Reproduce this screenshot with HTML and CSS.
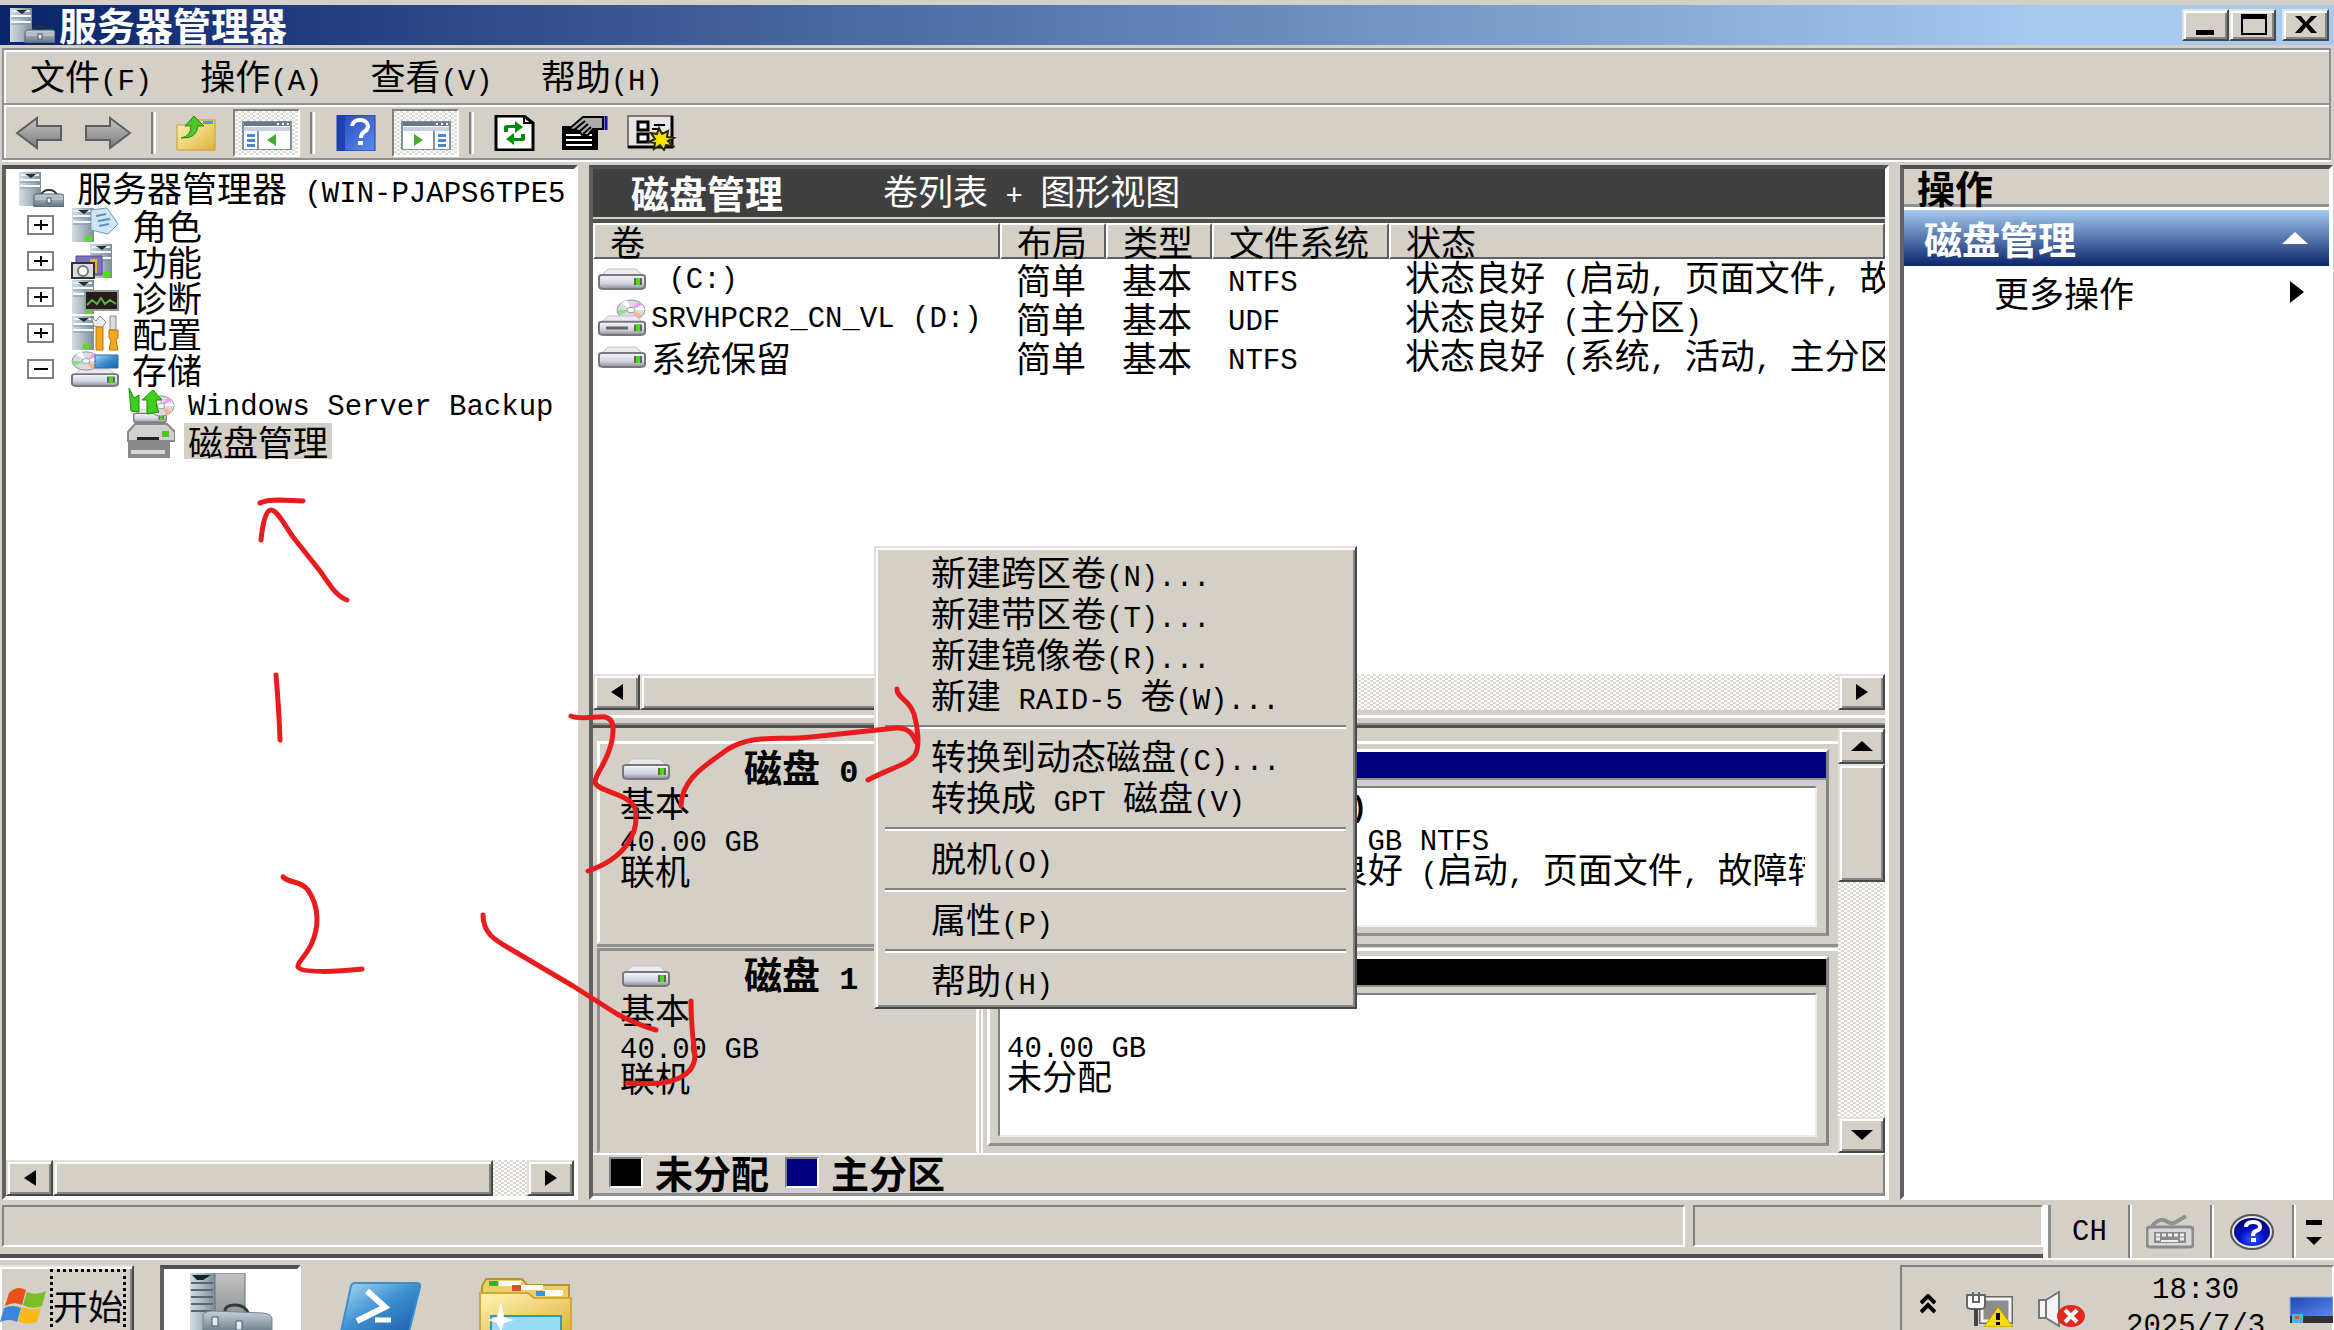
FILE: index.html
```html
<!DOCTYPE html>
<html lang="zh-CN">
<head>
<meta charset="utf-8">
<title>服务器管理器</title>
<link rel="stylesheet" href="styles.css">
</head>
<body>
<svg class="defs" aria-hidden="true">
  <defs>
    <linearGradient id="steel" x1="0" x2="1"><stop offset="0" stop-color="#d3dde3"/><stop offset=".5" stop-color="#a9b8c1"/><stop offset="1" stop-color="#7d8d97"/></linearGradient>
    <linearGradient id="steelDown" x1="0" y1="0" x2="0" y2="1"><stop offset="0" stop-color="#c5d2da"/><stop offset="1" stop-color="#60727e"/></linearGradient>
    <linearGradient id="hull" x1="0" y1="0" x2="0" y2="1"><stop offset="0" stop-color="#f6f6fa"/><stop offset=".6" stop-color="#d3d3e0"/><stop offset="1" stop-color="#8c8c96"/></linearGradient>
    <linearGradient id="gold" x1="0" y1="0" x2="1" y2="1"><stop offset="0" stop-color="#fff6b4"/><stop offset="1" stop-color="#e0b23e"/></linearGradient>
    <linearGradient id="azure" x1="0" y1="0" x2="1" y2="1"><stop offset="0" stop-color="#a8dcf4"/><stop offset=".5" stop-color="#3b8fd0"/><stop offset="1" stop-color="#1b5ca8"/></linearGradient>
    <linearGradient id="royal" x1="0" y1="0" x2="1" y2="1"><stop offset="0" stop-color="#2446b8"/><stop offset="1" stop-color="#5c8cf0"/></linearGradient>
    <linearGradient id="lead" x1="0" y1="0" x2="0" y2="1"><stop offset="0" stop-color="#c4c4c4"/><stop offset="1" stop-color="#7c7c7c"/></linearGradient>
    <radialGradient id="orb" cx=".5" cy=".75" r=".7"><stop offset="0" stop-color="#3a5cff"/><stop offset=".5" stop-color="#0010c8"/><stop offset="1" stop-color="#000878"/></radialGradient>
  </defs>
  <symbol id="tower" viewBox="0 0 24 36" preserveAspectRatio="none">
    <path d="M1 1h22v34H1z" fill="url(#steel)"/><path d="M3 3h18v2H3z" fill="#eef4f7"/><path d="M7 3h11l-5 4z" fill="#1d3038"/><path d="M2 9h20M2 15h20" stroke="#f4f8fa" stroke-width="2"/><path d="M2 11h20M2 17h20" stroke="#8496a0"/>
  </symbol>
  <symbol id="server" viewBox="0 0 46 36" preserveAspectRatio="none">
    <use href="#tower" x="0" y="0" width="24" height="36"/>
    <path d="M23 24q2-5 8-5t8 5" fill="none" stroke="#25333c" stroke-width="2"/><path d="M16 25q0-2 3-2h24q3 0 3 2v11H16z" fill="url(#steelDown)" stroke="#53636d"/><path d="M17 28h28" stroke="#c9d6dd"/><path d="M29 27h4v5h-4z" fill="#edf2f5" stroke="#44545f"/>
  </symbol>
  <symbol id="drive" viewBox="0 0 48 22" preserveAspectRatio="none">
    <path d="M10 1h28l8 8H2z" fill="#ebebef" stroke="#c0c0c6"/><path d="M1 9q0-2 3-2h40q3 0 3 2v9q0 3-5 3H6q-5 0-5-3z" fill="url(#hull)" stroke="#77777f" stroke-width="2"/><path d="M36 10h8v7h-8z" fill="#5a6a50"/><path d="M38 10h4v7h-4z" fill="#4cd812"/>
  </symbol>
  <symbol id="disc" viewBox="0 0 30 24" preserveAspectRatio="none">
    <ellipse cx="15" cy="12" rx="14" ry="11" fill="#dadbe0" stroke="#8d8f95"/><path d="M15 12L5 4l6-3zM15 12l11-6 3 6z" fill="#fff"/><path d="M15 12L4 18l-3-6z" fill="#8de08a"/><path d="M15 12l8-10 4 4z" fill="#f09af0"/><path d="M15 12l12 6-6 4z" fill="#f6b58c"/><ellipse cx="15" cy="12" rx="4" ry="3" fill="#fff" stroke="#999"/>
  </symbol>
  <symbol id="box" viewBox="0 0 27 20"><path d="M1 1h25v18H1z" fill="#fff" stroke="#808080" stroke-width="2"/><path d="M7 10h14" stroke="#000" stroke-width="2"/></symbol>
</svg>

<div class="app">
  <header class="titlebar">
    <svg class="ic" width="46" height="36"><use href="#server"/></svg>
    <h1>服务器管理器</h1>
    <div class="wincontrols">
      <button type="button" class="raised" aria-label="最小化"><svg width="28" height="22"><path d="M4 16h18v5H4z"/></svg></button>
      <button type="button" class="raised" aria-label="最大化"><svg width="28" height="22"><path d="M2 0h26v21H2zM4 5v14h22V5z" fill-rule="evenodd"/></svg></button>
      <button type="button" class="raised close" aria-label="关闭"><svg width="28" height="22"><path d="M3 2h6l5 6 5-6h6l-8 8 8 9h-6l-5-6-5 6H3l8-9z"/></svg></button>
    </div>
  </header>

  <div class="bars">
    <nav class="menubar">
      <button type="button">文件<span class="en">(F)</span></button>
      <button type="button">操作<span class="en">(A)</span></button>
      <button type="button">查看<span class="en">(V)</span></button>
      <button type="button">帮助<span class="en">(H)</span></button>
    </nav>
    <div class="toolbar">
      <button type="button" aria-label="后退"><svg width="48" height="34"><path d="M2 17L22 2v8h24v14H22v8z" fill="url(#lead)" stroke="#5e5e5e" stroke-width="2"/></svg></button>
      <button type="button" aria-label="前进"><svg width="48" height="34"><path d="M46 17L26 2v8H2v14h24v8z" fill="url(#lead)" stroke="#5e5e5e" stroke-width="2"/></svg></button>
      <span class="sep"></span>
      <button type="button" aria-label="上一级"><svg width="44" height="36"><path d="M2 10h14l3-5h21v30H2z" fill="url(#gold)" stroke="#c79a35"/><path d="M28 6h10v3H28z" fill="#4a9be8"/><path d="M6 23q10-2 10-12h-6L19 1l10 10h-6q-1 13-17 12z" fill="#4cc82e" stroke="#2a8a18"/></svg></button>
      <button type="button" class="pressed" aria-label="显示隐藏控制台树"><svg width="50" height="34"><path d="M1 6h48v28H1z" fill="#fff" stroke="#8390a0" stroke-width="2"/><path d="M2 6h46v4H2z" fill="#66788c"/><path d="M2 11h46v4H2z" fill="#c8d2de"/><path d="M35 7h2v2h-2zM40 7h2v2h-2zM45 7h2v2h-2z" fill="#fff"/><path d="M16 15v19" stroke="#8390a0" stroke-width="2"/><path d="M5 18h8v3H5zM5 23h8v3H5zM5 28h8v3H5z" fill="#4a86d8"/><path d="M34 18v12l-9-6z" fill="#3fae2a"/></svg></button>
      <span class="sep"></span>
      <button type="button" aria-label="帮助"><svg width="40" height="36"><path d="M1 0h38v36H1z" fill="url(#royal)" stroke="#203a9c"/><path d="M1 0h8v36H1z" fill="#1f3fb4"/><path d="M16 11q1-6 8-6t8 6q0 4-4 6-3 2-3 6" fill="none" stroke="#fff" stroke-width="4"/><path d="M22 26h5v4h-5z" fill="#fff"/></svg></button>
      <button type="button" class="pressed" aria-label="显示隐藏操作窗格"><svg width="50" height="34"><path d="M1 6h48v28H1z" fill="#fff" stroke="#8390a0" stroke-width="2"/><path d="M2 6h46v4H2z" fill="#66788c"/><path d="M2 11h46v4H2z" fill="#c8d2de"/><path d="M35 7h2v2h-2zM40 7h2v2h-2zM45 7h2v2h-2z" fill="#fff"/><path d="M33 15v19" stroke="#8390a0" stroke-width="2"/><path d="M37 18h8v3h-8zM37 23h8v3h-8zM37 28h8v3h-8z" fill="#4a86d8"/><path d="M13 18v12l9-6z" fill="#3fae2a"/></svg></button>
      <span class="sep"></span>
      <button type="button" aria-label="刷新"><svg width="42" height="36"><path d="M2 1h28l9 7v27H2z" fill="#fff" stroke="#000" stroke-width="3"/><path d="M30 1v7h9" fill="none" stroke="#000" stroke-width="2"/><path d="M10 17v-5q0-2 3-2h8V6l8 6-8 6v-5h-7v4zM31 19v5q0 2-3 2h-8v4l-8-6 8-6v5h7v-4z" fill="#078a07"/></svg></button>
      <button type="button" aria-label="属性"><svg width="48" height="36"><path d="M1 11h36v24H1z"/><path d="M5 20h26M5 25h26M5 30h26" stroke="#fff" stroke-width="2"/><path d="M8 14L22 2h20v12H32l-5 6h-6l-3-4z" fill="#aaa" stroke="#000" stroke-width="2"/><path d="M13 15l11-9M18 17l9-8M22 19l8-7" stroke="#000" stroke-width="2"/><path d="M45 1v14" stroke="#1010b0" stroke-width="3"/></svg></button>
      <button type="button" aria-label="设置"><svg width="50" height="36"><path d="M1 1h44v31H1z" fill="#e6e6e6" stroke="#777" stroke-width="2"/><path d="M45 1v31H1" fill="none" stroke="#000" stroke-width="3"/><path d="M11 7h10v8H11zM11 19h10v8H11z" fill="#fff" stroke="#000" stroke-width="3"/><path d="M27 10h11M25 14h8" stroke="#000" stroke-width="2"/><path d="M32 13l3 6 6-3-1 6 7 1-6 3 5 5-7-1-2 5-4-5-6 4 1-6-6-1 6-3-4-6 6 1z" fill="#f5e400" stroke="#2a2600" stroke-width="2"/></svg></button>
    </div>
  </div>

  <main class="workspace">
    <section class="tree sunken">
      <ul>
        <li class="l0"><svg class="ic" width="46" height="36"><use href="#server"/></svg><span>服务器管理器<span class="en"> (WIN-PJAPS6TPE5</span></span></li>
        <li><button type="button" class="exp" aria-label="展开"><svg width="27" height="20"><use href="#box"/><path d="M13 5h2v10h-2z"/></svg></button><svg class="ic" width="48" height="36"><use href="#tower" width="24" height="36"/><path d="M14 29h7v5h-7z" fill="#52e01c"/><path d="M20 3l16-2 11 16-10 10-17-4z" fill="#cfe6f7" stroke="#6e9dc0"/><path d="M25 9l10-2M27 14l12-2M28 19l10-2" stroke="#5f8fb8" stroke-width="2"/></svg><span>角色</span></li>
        <li><button type="button" class="exp" aria-label="展开"><svg width="27" height="20"><use href="#box"/><path d="M13 5h2v10h-2z"/></svg></button><svg class="ic" width="48" height="36"><use href="#tower" x="18" width="24" height="36"/><path d="M32 29h7v5h-7z" fill="#52e01c"/><path d="M5 13h26v19H5z" fill="#7c74b8" stroke="#4c4690"/><path d="M19 16h7v14h-7z" fill="#f0b428"/><path d="M1 20h22v15H1z" fill="#ddd" stroke="#333" stroke-width="2"/><circle cx="12" cy="28" r="5" fill="#fff" stroke="#777" stroke-width="2"/></svg><span>功能</span></li>
        <li><button type="button" class="exp" aria-label="展开"><svg width="27" height="20"><use href="#box"/><path d="M13 5h2v10h-2z"/></svg></button><svg class="ic" width="48" height="36"><use href="#tower" width="24" height="36"/><path d="M14 30h7v5h-7z" fill="#52e01c"/><path d="M14 12h33v19H14z" fill="#261c1c" stroke="#999" stroke-width="2"/><path d="M16 26l5-5 5 4 4-6 4 6 5-4 6 4" fill="none" stroke="#58b43a" stroke-width="2"/></svg><span>诊断</span></li>
        <li><button type="button" class="exp" aria-label="展开"><svg width="27" height="20"><use href="#box"/><path d="M13 5h2v10h-2z"/></svg></button><svg class="ic" width="48" height="36"><use href="#tower" width="24" height="36"/><path d="M12 29h6v5h-6z" fill="#52e01c"/><path d="M20 2l5 4 4-5 6 6-4 6-8-2z" fill="#ececec" stroke="#8a8a8a"/><path d="M39 1h6v14h-6z" fill="#ddd" stroke="#888"/><path d="M25 12h7v23h-7zM38 15h9v8l-2 2 2 10h-9l2-10-2-2z" fill="#f6a81c" stroke="#b87208"/></svg><span>配置</span></li>
        <li><button type="button" class="exp" aria-label="折叠"><svg width="27" height="20"><use href="#box"/></svg></button><svg class="ic" width="48" height="36"><use href="#drive" y="17" width="48" height="19"/><use href="#disc" width="30" height="20"/><path d="M24 4h23v13H24z" fill="url(#azure)" stroke="#2c6f9c"/></svg><span>存储</span></li>
        <li class="l2"><svg class="ic" width="48" height="36"><use href="#drive" x="6" y="22" width="34" height="14"/><use href="#disc" x="20" y="8" width="28" height="22"/><path d="M2 1l5 10 5-3v17l-8-1zM20 27V13h-5L26 3l9 10h-6q0 8 3 12z" fill="#3fd01e" stroke="#1c8a0c"/></svg><span class="en">Windows Server Backup</span></li>
        <li class="l2"><svg class="ic" width="48" height="36"><path d="M1 18h42v17H1z" fill="#8a8a8a"/><path d="M4 27h34v4H4z" fill="#d8d8d8"/><path d="M8 1h32l8 8v9H1V9z" fill="#d0d0d0" stroke="#888" stroke-width="2"/><path d="M10 14h22v3H10z" fill="#222"/><path d="M35 8h7v6h-7z" fill="#4cc81a"/></svg><span class="selected">磁盘管理</span></li>
      </ul>
      <div class="hscroll">
        <button type="button" class="raised" aria-label="向左滚动"><svg width="14" height="18"><path d="M13 1v16L1 9z"/></svg></button>
        <div class="thumb raised tree-thumb"></div>
        <button type="button" class="raised end" aria-label="向右滚动"><svg width="14" height="18"><path d="M1 1v16l12-8z"/></svg></button>
      </div>
    </section>

    <section class="center sunken">
      <div class="caption"><h2>磁盘管理</h2><span>卷列表<span class="en"> + </span>图形视图</span></div>
      <div class="volumes">
        <table>
          <colgroup><col class="c1"><col class="c2"><col class="c2"><col class="c3"><col></colgroup>
          <thead><tr><th>卷</th><th>布局</th><th>类型</th><th>文件系统</th><th>状态</th></tr></thead>
          <tbody>
            <tr><td><div class="vol"><svg width="48" height="22"><use href="#drive"/></svg><span class="en"> (C:)</span></div></td><td>简单</td><td>基本</td><td><span class="en">NTFS</span></td><td>状态良好<span class="en"> (</span>启动<span class="en">, </span>页面文件<span class="en">, </span>故</td></tr>
            <tr><td><div class="vol"><svg width="48" height="37"><use href="#disc" x="18" width="30" height="22"/><use href="#drive" y="16" width="48" height="21"/><path d="M8 29h22" stroke="#666" stroke-width="3"/></svg><span class="en">SRVHPCR2_CN_VL (D:)</span></div></td><td>简单</td><td>基本</td><td><span class="en">UDF</span></td><td>状态良好<span class="en"> (</span>主分区<span class="en">)</span></td></tr>
            <tr><td><div class="vol"><svg width="48" height="22"><use href="#drive"/></svg><span>系统保留</span></div></td><td>简单</td><td>基本</td><td><span class="en">NTFS</span></td><td>状态良好<span class="en"> (</span>系统<span class="en">, </span>活动<span class="en">, </span>主分区</td></tr>
          </tbody>
        </table>
        <div class="hscroll">
          <button type="button" class="raised" aria-label="向左滚动"><svg width="14" height="18"><path d="M13 1v16L1 9z"/></svg></button>
          <div class="thumb raised list-thumb"></div>
          <button type="button" class="raised end" aria-label="向右滚动"><svg width="14" height="18"><path d="M1 1v16l12-8z"/></svg></button>
        </div>
      </div>
      <div class="splitter"></div>
      <div class="graph">
        <div class="disks">
          <article class="disk">
            <div class="info">
              <div class="name"><svg width="48" height="22"><use href="#drive"/></svg><strong>磁盘<span class="en"> 0</span></strong></div>
              <p>基本</p><p><span class="en">40.00 GB</span></p><p>联机</p>
            </div>
            <div class="parts">
              <div class="part reserved"><i class="primary"></i><div class="body"></div></div>
              <div class="part"><i class="primary"></i><div class="body"><p><strong class="en">  (C:)</strong></p><p><span class="en">39.90 GB NTFS</span></p><p>状态良好<span class="en"> (</span>启动<span class="en">, </span>页面文件<span class="en">, </span>故障转</p></div></div>
            </div>
          </article>
          <article class="disk on">
            <div class="info">
              <div class="name"><svg width="48" height="22"><use href="#drive"/></svg><strong>磁盘<span class="en"> 1</span></strong></div>
              <p>基本</p><p><span class="en">40.00 GB</span></p><p>联机</p>
            </div>
            <div class="parts">
              <div class="part"><i class="unallocated"></i><div class="body"><p></p><p><span class="en">40.00 GB</span></p><p>未分配</p></div></div>
            </div>
          </article>
        </div>
        <div class="vscroll">
          <button type="button" class="raised" aria-label="向上滚动"><svg width="22" height="10"><path d="M0 10h22L11 0z"/></svg></button>
          <div class="thumb raised"></div>
          <button type="button" class="raised end" aria-label="向下滚动"><svg width="22" height="10"><path d="M0 0h22L11 10z"/></svg></button>
        </div>
      </div>
      <div class="legend"><i class="unallocated"></i><strong>未分配</strong><i class="primary"></i><strong>主分区</strong></div>
    </section>

    <aside class="actions sunken">
      <h2>操作</h2>
      <button type="button" class="group">磁盘管理<svg width="28" height="14"><path d="M14 1l13 12H1z" fill="#fff"/></svg></button>
      <button type="button" class="more">更多操作<svg width="16" height="24"><path d="M1 1v22l14-11z"/></svg></button>
    </aside>
  </main>

  <footer class="statusrow">
    <div class="status"><span></span><span></span></div>
    <div class="lang">
      <button type="button" class="ch"><span class="en">CH</span></button>
      <button type="button" aria-label="键盘"><svg width="48" height="34"><path d="M6 11q8-9 14-5t10 1l10-6" fill="none" stroke="#909090" stroke-width="4"/><path d="M4 12h40q3 0 3 3v14q0 3-3 3H4q-3 0-3-3V15q0-3 3-3z" fill="#d8d8d8" stroke="#8a8a8a" stroke-width="3"/><path d="M8 17h32v11H8z" fill="#8a8a8a"/><path d="M10 20h28M10 24h4M34 24h4" stroke="#eee" stroke-width="3" stroke-dasharray="4 2"/><path d="M15 26h17" stroke="#eee" stroke-width="2"/></svg></button>
      <button type="button" aria-label="帮助"><svg width="44" height="36"><ellipse cx="22" cy="18" rx="21" ry="17" fill="#e8e8e8" stroke="#555" stroke-width="2"/><ellipse cx="22" cy="18" rx="18" ry="14" fill="url(#orb)"/><path d="M16 13q0-5 7-5t7 5q0 3-4 4-3 1-3 5" fill="none" stroke="#fff" stroke-width="4"/><path d="M21 24h5v4h-5z" fill="#fff"/></svg></button>
      <button type="button" class="opts" aria-label="选项"><svg width="16" height="28"><path d="M0 2h16v5H0zM0 19h16l-8 8z"/></svg></button>
    </div>
  </footer>

  <div class="taskbar">
    <button type="button" class="start raised"><svg width="46" height="44"><path d="M9 8q8-8 17-3l-4 15q-8-4-17 1z" fill="#e8501c"/><path d="M27 7q9 4 19-1l-4 15q-10 4-19-1z" fill="#7cbc28"/><path d="M4 23q8-4 17 0l-4 14q-8-4-17 0z" fill="#3a86d8"/><path d="M22 22q10 4 19 1l-4 14q-10 4-19-1z" fill="#fcb814"/></svg><span>开始</span></button>
    <button type="button" class="task active" aria-label="服务器管理器"><svg width="84" height="62"><path d="M1 0h25v62H1z" fill="url(#steel)"/><path d="M26 0h30v62H26z" fill="url(#lead)" stroke="#66757c"/><path d="M3 2h19l-8 5H8z" fill="#15252c"/><path d="M2 10h22M2 17h22M2 24h22M2 31h22M2 38h22" stroke="#59686f" stroke-width="2"/><path d="M36 38q0-6 10-6t14 9" fill="none" stroke="#303a40" stroke-width="3"/><path d="M14 42q2-4 10-4l50 2q9 1 9 6v16H14z" fill="url(#steelDown)" stroke="#6f8290"/><path d="M23 44h6v9h-6zM47 48h6v9h-6z" fill="#e4ebef" stroke="#4b5a64"/></svg></button>
    <button type="button" class="task ps" aria-label="PowerShell"><svg width="84" height="50"><path d="M18 1h62q4 0 3 4L72 50H4L14 4q1-3 4-3z" fill="url(#azure)" stroke="#3c8fc8" stroke-width="2"/><path d="M30 9l18 16-28 14" fill="none" stroke="#fff" stroke-width="6"/><path d="M38 38h16" stroke="#fff" stroke-width="5"/></svg></button>
    <button type="button" class="task files" aria-label="资源管理器"><svg width="94" height="54"><path d="M3 8l4-7h36l5 6h42v47H2z" fill="#eccf68" stroke="#b8952e" stroke-width="2"/><path d="M20 3h22v5H20zM42 7h22v5H42zM64 12h20v5H64z" fill="#fff"/><path d="M10 3h9v5h-9z" fill="#1fba28"/><path d="M33 7h9v6h-9z" fill="#d8502c"/><path d="M1 15h48l6 5h37v34H1z" fill="url(#gold)" stroke="#cfa83c" stroke-width="2"/><path d="M57 13h9v5h-9z" fill="#3098e8"/><path d="M66 13h17v5H66z" fill="#fff"/><path d="M12 38h70v16H12z" fill="#9adcf4" stroke="#3c94b8" stroke-width="2"/><path d="M22 24l3 15 10 3-10 3-3 9-4-9-10-3 10-3z" fill="#fff"/></svg></button>
    <div class="tray">
      <button type="button" aria-label="显示隐藏图标"><svg width="16" height="20"><path d="M1 9l7-7 7 7M1 18l7-7 7 7" fill="none" stroke="#000" stroke-width="4"/></svg></button>
      <button type="button" aria-label="网络"><svg width="48" height="36"><path d="M14 6h32v26H14z" fill="#8c8c8c" stroke="#666" stroke-width="2"/><path d="M16 8h28v22H16z" fill="none" stroke="#f4f4f4" stroke-width="3"/><path d="M1 4h18v11q0 3-5 3H6q-5 0-5-3z" fill="#fff" stroke="#666" stroke-width="2"/><path d="M7 1v10h6V1" fill="none" stroke="#666" stroke-width="2"/><path d="M10 18v17" stroke="#444" stroke-width="4"/><path d="M32 16l15 20H18z" fill="#fbdc14" stroke="#b89400"/><path d="M30 22h4v7h-4zM30 31h4v3h-4z"/></svg></button>
      <button type="button" aria-label="音量"><svg width="48" height="38"><path d="M1 9h7L21 1v34L8 27H1z" fill="#f4f4f4" stroke="#777" stroke-width="2"/><path d="M8 9v18" stroke="#777" stroke-width="2"/><ellipse cx="33" cy="25" rx="14" ry="11" fill="#e0281c"/><path d="M27 19l12 12M39 19L27 31" stroke="#fff" stroke-width="4"/></svg></button>
      <time class="en">18:30<br>2025/7/3</time>
      <button type="button" class="desktop" aria-label="显示桌面"><svg width="44" height="28"><path d="M1 1h43v21H1z" fill="url(#royal)" stroke="#8ab0d8"/><path d="M1 20h43v7H1z" fill="#333"/><path d="M3 18h11v9H3z" fill="#48b4e8"/><path d="M6 20h4v3H6z" fill="#f05020"/></svg></button>
    </div>
  </div>
</div>

<div class="context raised" role="menu">
  <button type="button" role="menuitem">新建跨区卷<span class="en">(N)...</span></button>
  <button type="button" role="menuitem">新建带区卷<span class="en">(T)...</span></button>
  <button type="button" role="menuitem">新建镜像卷<span class="en">(R)...</span></button>
  <button type="button" role="menuitem">新建<span class="en"> RAID-5 </span>卷<span class="en">(W)...</span></button>
  <hr>
  <button type="button" role="menuitem">转换到动态磁盘<span class="en">(C)...</span></button>
  <button type="button" role="menuitem">转换成<span class="en"> GPT </span>磁盘<span class="en">(V)</span></button>
  <hr>
  <button type="button" role="menuitem">脱机<span class="en">(O)</span></button>
  <hr>
  <button type="button" role="menuitem">属性<span class="en">(P)</span></button>
  <hr>
  <button type="button" role="menuitem">帮助<span class="en">(H)</span></button>
</div>

<svg class="ink" width="940" height="1100" aria-hidden="true">
  <path d="M260 503Q265 500 280 500L303 501"/>
  <path d="M261 540Q264 510 271 510C277 510 284 524 293 537L320 571C330 585 336 596 347 600"/>
  <path d="M276 675Q279 710 280 740"/>
  <path d="M283 877C291 884 300 880 308 890C320 908 319 928 311 945C304 959 297 962 298 967C301 973 335 972 362 969"/>
  <path d="M483 915C483 933 495 940 507 947L573 986L617 1014Q638 1025 656 1030"/>
  <path d="M691 1001C691 1027 693 1040 695 1055C695 1072 680 1080 662 1083Q645 1084 627 1083"/>
  <path d="M571 716C580 720 598 716 605 717C614 719 614 728 612 740C608 762 596 772 595 782C597 792 629 793 635 808C640 832 626 858 588 871"/>
  <path d="M681 806C682 778 705 766 728 749C755 733 780 741 811 737L896 728Q911 727 916 742"/>
  <path d="M897 689C897 698 909 699 914 714C918 728 920 746 915 755C908 765 890 768 868 780"/>
</svg>
</body>
</html>
```
FILE: styles.css
```css
* { box-sizing: border-box; }

body {
  margin: 0;
  background: #d4d0c8;
  color: #000;
  font: 35px/36px "Noto Sans CJK SC", sans-serif;
  overflow: hidden;
}

button {
  margin: 0;
  padding: 0;
  border: 0;
  background: none;
  color: inherit;
  font: inherit;
}

svg { display: block; flex: none; }
h1, h2, p, ul { margin: 0; padding: 0; font-size: 35px; }
li { list-style: none; }

.defs { position: absolute; width: 0; height: 0; }
.en { font-family: "Liberation Mono", monospace; font-size: 29px; line-height: 1; white-space: pre; }

.raised {
  background: #d4d0c8;
  border: 2px solid;
  border-color: #e4e1db #484848 #484848 #e4e1db;
  box-shadow: inset 2px 2px #fff, inset -2px -2px #848484;
}

.sunken {
  border: 4px solid;
  border-color: #505050 #fff #fff #606060;
}

.app {
  display: flex;
  flex-direction: column;
  height: 100vh;
  padding-top: 5px;
}

/* Title bar */
.titlebar {
  display: flex;
  align-items: center;
  flex: none;
  height: 40px;
  padding: 0 5px 0 9px;
  gap: 4px;
  color: #fff;
  background: linear-gradient(90deg, #0a246a, #a6caf0 88%);
}
.titlebar h1 { flex: 1; font-size: 38px; line-height: 36px; padding-bottom: 2px; }
.wincontrols { display: flex; color: #000; }
.wincontrols button {
  display: flex;
  align-items: center;
  justify-content: center;
  width: 47px;
  height: 32px;
}
.wincontrols .close { margin-left: 6px; }

/* Menu bar and toolbar */
.bars {
  flex: none;
  margin: 3px 3px 5px 2px;
  border: 2px solid #909090;
  box-shadow: inset 2px 2px #fff, 0 2px #fff;
}
.menubar {
  display: flex;
  height: 55px;
  padding-left: 2px;
  border-bottom: 2px solid #909090;
}
.menubar button { padding: 0 24px; }
.toolbar {
  display: flex;
  align-items: center;
  height: 53px;
  padding-left: 10px;
  border-top: 2px solid #fff;
}
.toolbar button {
  display: flex;
  align-items: center;
  justify-content: center;
  width: 67px;
  height: 48px;
}
.toolbar button:first-child { width: 50px; margin-right: 10px; }
.toolbar .pressed {
  border: 2px solid;
  border-color: #808080 #fff #fff #808080;
  background: repeating-conic-gradient(#fff 0 25%, #dedbd5 0 50%) 0 0 / 6px 4px;
}
.toolbar .sep + button { width: 72px; }
.sep {
  width: 5px;
  height: 42px;
  margin: 0 5px 0 10px;
  border-left: 2px solid #808080;
  border-right: 2px solid #fff;
}

/* Three panes */
.workspace {
  flex: 1;
  min-height: 0;
  display: grid;
  grid-template-columns: 576px minmax(0, 1fr) 433px;
  gap: 11px;
  padding: 0 1px 0 2px;
}
.tree, .actions { background: #fff; min-width: 0; }
.tree { display: flex; flex-direction: column; }
.tree ul { flex: 1; padding-top: 2px; }
.tree li {
  display: flex;
  align-items: center;
  gap: 13px;
  height: 36px;
  padding-left: 21px;
  white-space: nowrap;
}
.tree .l0 { padding-left: 12px; }
.tree .l2 { padding-left: 121px; gap: 9px; }
.exp { margin-right: 4px; }
.tree .l2 > span { padding: 0 4px; }
.tree .l2 > .en, .vol .en { padding-top: 4px; }
.selected { background: #d4d0c8; }

/* Scroll bars */
.hscroll, .vscroll {
  display: flex;
  flex: none;
  background: repeating-conic-gradient(#fff 0 25%, #dcd9d2 0 50%) 0 0 / 6px 4px;
}
.hscroll { height: 36px; }
.hscroll button, .vscroll button {
  display: flex;
  align-items: center;
  justify-content: center;
  width: 47px;
  height: 36px;
}
.hscroll .end { margin-left: auto; }
.tree-thumb { width: 440px; }
.list-thumb { width: 420px; }
.vscroll { flex-direction: column; width: 47px; }
.vscroll .thumb { height: 118px; }
.vscroll .end { margin-top: auto; }

/* Volume list */
.center { display: flex; flex-direction: column; min-width: 0; }
.caption {
  display: flex;
  align-items: center;
  flex: none;
  height: 48px;
  padding: 0 0 3px 38px;
  gap: 100px;
  color: #fff;
  background: #404040;
}
.caption h2 { font-size: 38px; }
.volumes {
  display: flex;
  flex-direction: column;
  justify-content: space-between;
  flex: 1;
  min-height: 0;
  margin-top: 2px;
  border-top: 4px solid #505050;
  background: #fff;
}
table { width: 100%; table-layout: fixed; border-collapse: separate; border-spacing: 0; }
.c1 { width: 407px; }
.c2 { width: 106px; }
.c3 { width: 177px; }
th {
  height: 36px;
  padding: 0 0 0 15px;
  border: 2px solid;
  border-color: #fff #606060 #606060 #fff;
  background: #d4d0c8;
  font-weight: 400;
  line-height: 32px;
  text-align: left;
}
td { height: 39px; padding: 0 0 0 16px; line-height: 33px; white-space: nowrap; }
td:last-child { overflow-x: clip; }
td:first-child { padding-left: 5px; }
.vol { display: flex; align-items: center; gap: 5px; height: 38px; }

.splitter {
  flex: none;
  height: 18px;
  border-top: 5px solid #d4d0c8;
  border-bottom: 3px solid #505050;
  box-shadow: inset 0 3px #fff, inset 0 -2px #909090;
}

/* Disk graph */
.graph { display: flex; flex: none; height: 425px; }
.disks { flex: 1; min-width: 0; padding: 13px 0 0 4px; }
.disk { display: flex; height: 206px; border-bottom: 3px solid #909090; }
.disk + .disk { border-bottom: 0; margin-top: 1px; }
.info {
  width: 382px;
  flex: none;
  padding: 8px 0 0 20px;
  border: 3px solid;
  border-color: #fff #fff transparent #fff;
}
.info p { height: 34px; line-height: 31px; }
.on .info { border-color: #909090 #fff transparent #909090; }
.name { display: flex; align-items: center; gap: 74px; height: 34px; margin-left: 2px; }
strong { font-size: 38px; }
strong .en { font-size: 32px; }
.parts {
  display: flex;
  flex: 1;
  min-width: 0;
  margin-left: 2px;
  padding: 5px 9px 8px 4px;
  border-top: 3px solid #fff;
  border-left: 2px solid #fff;
}
.part {
  display: flex;
  flex-direction: column;
  flex: 1;
  min-width: 0;
  border: 3px solid;
  border-color: #fff #848484 #909090 #fff;
}
.part > i { height: 28px; border-bottom: 2px solid #909090; }
.reserved { flex: 0 0 256px; }
.primary { background: #000080; }
.unallocated { background: #000; }
.body {
  flex: 1;
  margin: 6px 9px 6px 8px;
  padding: 0 10px 0 7px;
  border: 2px solid;
  border-color: #808080 #f0eeea #f0eeea #808080;
  background: #fff;
}
.body p { height: 33px; line-height: 28px; white-space: nowrap; overflow-x: clip; }

.legend {
  display: flex;
  align-items: center;
  flex: none;
  gap: 12px;
  height: 43px;
  padding: 0 0 4px 16px;
  border-top: 2px solid #fff;
  border-bottom: 3px solid #909090;
  border-right: 2px solid #848484;
}
.legend i { width: 34px; height: 31px; border: 2px solid; border-color: #808080 #fff #fff #808080; }
.legend i + strong { margin-right: 4px; }

/* Actions pane */
.actions h2 {
  height: 38px;
  padding-left: 13px;
  border-bottom: 3px solid #909090;
  background: #d4d0c8;
  font-size: 38px;
}
.actions button {
  display: flex;
  align-items: center;
  justify-content: space-between;
  width: 100%;
}
.actions .group {
  height: 58px;
  margin-top: 1px;
  padding: 0 20px;
  border-top: 2px solid #fff;
  background: linear-gradient(#a6caf0, #0a246a);
  color: #fff;
  font-size: 38px;
  font-weight: 700;
}
.actions .more { height: 52px; padding: 0 24px 0 90px; }

/* Status row */
.statusrow { display: flex; flex: none; height: 53px; margin-top: 5px; }
.status {
  display: flex;
  flex: 1;
  gap: 8px;
  padding: 0 0 7px 2px;
  border-bottom: 4px solid #505050;
}
.status span {
  flex: 1;
  border: 2px solid;
  border-color: #808080 #fff #fff #808080;
}
.status span + span { flex: 0 0 350px; }
.lang { display: flex; border-left: 5px solid #fff; box-shadow: inset 3px 0 #909090; }
.lang button {
  display: flex;
  align-items: center;
  justify-content: center;
  width: 82px;
  border-right: 2px solid #808080;
  box-shadow: 2px 0 #fff;
}
.lang .ch { padding: 2px 0 0 3px; }
.lang .opts { width: 40px; border: 0; box-shadow: none; }

/* Task bar */
.taskbar {
  display: flex;
  flex: none;
  height: 72px;
  padding-top: 5px;
  border-top: 2px solid #fff;
  overflow: hidden;
}
.start {
  display: flex;
  align-items: center;
  width: 134px;
  height: 84px;
  border-left: 0;
  padding: 0;
  gap: 4px;
}
.start span { padding: 16px 0 20px; border: 3px dotted #000; line-height: 34px; width: 76px; white-space: nowrap; }
.task { display: flex; justify-content: center; }
.active {
  width: 141px;
  height: 84px;
  margin-left: 26px;
  padding-top: 4px;
  border: 4px solid;
  border-color: #505050 #fff #fff #606060;
  background: #fff;
}
.ps { margin-left: 36px; padding-top: 17px; }
.files { margin-left: 58px; padding-top: 13px; }
.tray {
  display: flex;
  align-items: flex-start;
  gap: 24px;
  width: 434px;
  height: 84px;
  margin-left: auto;
  padding: 24px 0 0 18px;
  border: 2px solid;
  border-color: #808080 #fff #fff #808080;
}
.tray button:first-child { margin-right: 6px; padding-top: 3px; }
.tray time { margin: -18px 0 0 16px; line-height: 36px; text-align: center; }
.tray .desktop { padding-top: 5px; }

/* Disk context menu */
.context {
  position: absolute;
  left: 874px;
  top: 546px;
  width: 483px;
  padding: 5px 9px;
}
.context button {
  display: block;
  width: 100%;
  height: 41px;
  padding: 0 0 2px 46px;
  text-align: left;
  white-space: nowrap;
}
hr { height: 4px; margin: 8px 0; border: 0; border-top: 2px solid #808080; border-bottom: 2px solid #fff; }

/* Hand-drawn marks */
.ink {
  position: absolute;
  left: 0;
  top: 0;
  fill: none;
  stroke: #e81c1c;
  stroke-width: 5;
  stroke-linecap: round;
  stroke-linejoin: round;
  pointer-events: none;
}
```
